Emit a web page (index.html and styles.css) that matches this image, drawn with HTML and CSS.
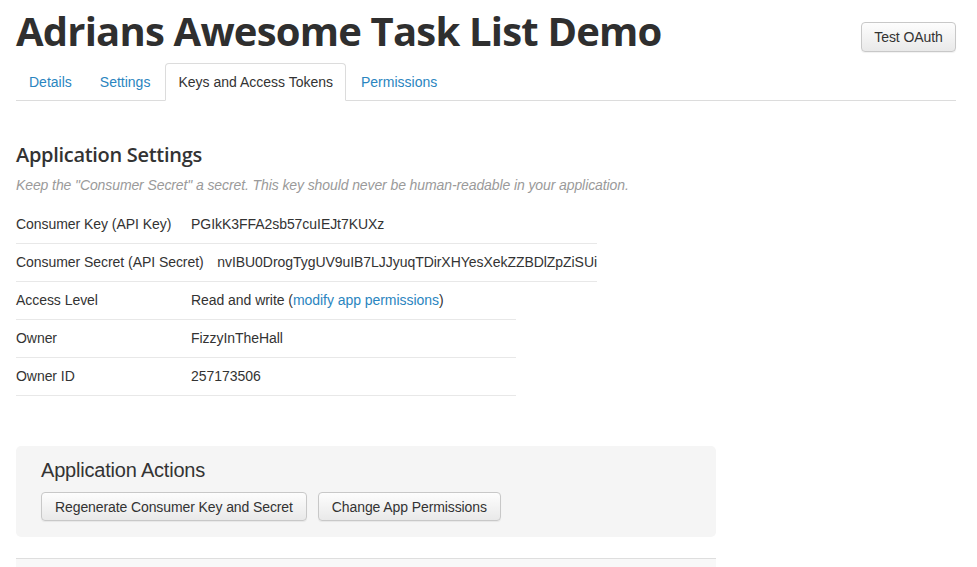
FILE: index.html
```html
<!DOCTYPE html>
<html>
<head>
<meta charset="utf-8">
<link rel="stylesheet" href="styles.css">
</head>
<body>
<div class="page">
  <header class="app-header">
    <h1 class="app-title">Adrians Awesome Task List Demo</h1>
    <button class="btn btn-test">Test OAuth</button>
  </header>
  <nav class="tabs">
    <a class="tab">Details</a>
    <a class="tab">Settings</a>
    <a class="tab active">Keys and Access Tokens</a>
    <a class="tab">Permissions</a>
  </nav>

  <section class="settings">
    <h2 class="section-title">Application Settings</h2>
    <p class="hint">Keep the "Consumer Secret" a secret. This key should never be human-readable in your application.</p>
    <div class="kv kv-wide">
      <div class="row"><span class="label">Consumer Key (API Key)</span><span class="value">PGIkK3FFA2sb57cuIEJt7KUXz</span></div>
      <div class="row"><span class="label">Consumer Secret (API Secret)</span><span class="value">nvIBU0DrogTygUV9uIB7LJJyuqTDirXHYesXekZZBDlZpZiSUi</span></div>
    </div>
    <div class="kv kv-narrow">
      <div class="row"><span class="label">Access Level</span><span class="value">Read and write (<a class="link">modify app permissions</a>)</span></div>
      <div class="row"><span class="label">Owner</span><span class="value">FizzyInTheHall</span></div>
      <div class="row"><span class="label">Owner ID</span><span class="value">257173506</span></div>
    </div>
  </section>

  <section class="actions">
    <h3 class="actions-title">Application Actions</h3>
    <div class="actions-buttons">
      <button class="btn">Regenerate Consumer Key and Secret</button>
      <button class="btn">Change App Permissions</button>
    </div>
  </section>

  <section class="next-panel"></section>
</div>
</body>
</html>
```

FILE: styles.css
```css
* { box-sizing: border-box; }
html, body { margin: 0; padding: 0; background: #fff; }
body {
  font-family: "Liberation Sans", Arial, sans-serif;
  font-size: 14px;
  color: #333;
  overflow: hidden;
  height: 567px;
}
.page {
  padding: 0 21px 0 16px;
}
.app-header {
  display: flex;
  justify-content: space-between;
  align-items: flex-start;
  height: 63px;
}
.app-title {
  margin: 0;
  padding-top: 6px;
  font-family: "Open Sans", sans-serif;
  font-weight: 700;
  font-size: 40px;
  line-height: 50px;
  letter-spacing: -0.8px;
  color: #2f2f2f;
  white-space: nowrap;
}
.btn {
  font-family: "Liberation Sans", Arial, sans-serif;
  font-size: 14px;
  color: #333;
  height: 29px;
  padding: 0 13px;
  border: 1px solid #c8c8c8;
  border-radius: 4px;
  background: linear-gradient(#fdfdfd, #e9e9e9);
  box-shadow: 0 1px 1px rgba(0,0,0,0.06);
  letter-spacing: -0.1px;
}
.btn-test {
  margin-top: 22px;
  height: 30px;
  width: 95px;
  padding: 0;
}
.tabs {
  display: flex;
  border-bottom: 1px solid #dcdcdc;
  height: 38px;
}
.tab {
  display: block;
  padding: 8px 12px;
  line-height: 20px;
  margin-right: 2px;
  color: #2a85c0;
  border: 1px solid transparent;
  border-radius: 4px 4px 0 0;
}
.tab.active {
  color: #333;
  background: #fff;
  border-color: #dcdcdc;
  border-bottom-color: #fff;
  height: 38px;
}
.settings {
  padding-top: 41px;
}
.section-title {
  margin: 0;
  font-family: "Open Sans", sans-serif;
  font-weight: 600;
  font-size: 20px;
  line-height: 26px;
  letter-spacing: -0.3px;
  color: #333;
}
.hint {
  margin: 7px 0 0;
  font-style: italic;
  font-size: 14px;
  line-height: 20px;
  color: #9a9a9a;
  padding-bottom: 11px;
  letter-spacing: -0.1px;
}
.kv-wide { width: 581px; }
.kv-narrow { width: 500px; }
.row {
  display: flex;
  padding: 8px 0;
  line-height: 21px;
  border-bottom: 1px solid #e8e8e8;
  white-space: nowrap;
  letter-spacing: -0.05px;
}
.label {
  min-width: 175px;
  padding-right: 16px;
}
.link { color: #2a85c0; }
.actions {
  margin-top: 50px;
  width: 700px;
  background: #f5f5f5;
  border-radius: 5px;
  padding: 12px 25px 16px;
}
.actions-title {
  margin: 0 0 10px;
  font-weight: 400;
  font-size: 20px;
  line-height: 24px;
  color: #333;
  letter-spacing: -0.2px;
}
.actions-buttons {
  display: flex;
  gap: 11px;
}
.next-panel {
  margin-top: 21px;
  width: 700px;
  height: 40px;
  background: #f8f8f8;
  border-top: 1px solid #dedede;
}
```
